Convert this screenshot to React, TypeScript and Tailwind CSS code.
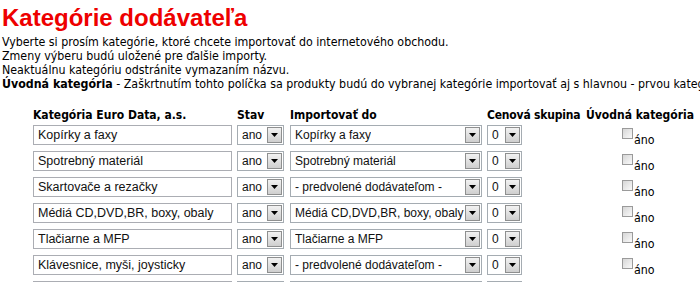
import React from "react";

type Row = {
  name: string;
  target: string;
};

const rows: Row[] = [
  { name: "Kopírky a faxy", target: "Kopírky a faxy" },
  { name: "Spotrebný materiál", target: "Spotrebný materiál" },
  { name: "Skartovače a rezačky", target: "- predvolené dodávateľom -" },
  { name: "Médiá CD,DVD,BR, boxy, obaly", target: "Médiá CD,DVD,BR, boxy, obaly" },
  { name: "Tlačiarne a MFP", target: "Tlačiarne a MFP" },
  { name: "Klávesnice, myši, joysticky", target: "- predvolené dodávateľom -" },
  // last row is only partly in view
  { name: "", target: "" },
];

function Arrow() {
  return (
    <div className="flex h-[16px] w-[15px] shrink-0 items-center justify-center border border-[#8e8f8f] bg-gradient-to-b from-[#f2f2f2] to-[#cfcfcf]">
      <svg width="7" height="4" viewBox="0 0 7 4">
        <path d="M0 0h7L3.5 4z" fill="#000" />
      </svg>
    </div>
  );
}

function Select({ value, width }: { value: string; width: string }) {
  return (
    <div
      className={`flex h-[20px] ${width} shrink-0 items-center justify-between border border-[#a5acb2] bg-white pl-[4px] pr-[1px]`}
    >
      <span className="overflow-hidden whitespace-nowrap text-[12px] leading-[18px] text-[#111]">{value}</span>
      <Arrow />
    </div>
  );
}

export default function App() {
  return (
    <div className="h-[282px] w-[700px] overflow-hidden bg-white font-['DejaVu_Sans_Condensed','DejaVu_Sans',sans-serif] text-[12.3px] text-black">
      <h1 className="pl-[2px] font-['Liberation_Sans',Arial,sans-serif] text-[24px] font-bold leading-[35px] text-[#ee0000]">
        Kategórie dodávateľa
      </h1>

      {/* Intro */}
      <div className="whitespace-nowrap pl-[2px] leading-[14px]">
        <p>Vyberte si prosím kategórie, ktoré chcete importovať do internetového obchodu.</p>
        <p>Zmeny výberu budú uložené pre ďalšie importy.</p>
        <p>Neaktuálnu kategóriu odstránite vymazaním názvu.</p>
        <p>
          <b>Úvodná kategória</b> - Zaškrtnutím tohto políčka sa produkty budú do vybranej
          kategórie importovať aj s hlavnou - prvou kategóriou.
        </p>
      </div>

      {/* Table */}
      <div className="mt-[17px] pl-[33px]">
        <div className="flex h-[17px] items-start whitespace-nowrap text-[12px] font-bold leading-[14px]">
          <div className="w-[204px]">Kategória Euro Data, a.s.</div>
          <div className="w-[53px]">Stav</div>
          <div className="w-[197px]">Importovať do</div>
          <div className="w-[99px] tracking-[-0.2px]">Cenová skupina</div>
          <div>Úvodná kategória</div>
        </div>

        <div className="flex flex-col gap-[6px] font-['Liberation_Sans',Arial,sans-serif]">
          {rows.map((row, i) => (
            <div key={i} className="flex h-[20px] items-start">
              <div className="flex h-[20px] w-[199px] shrink-0 items-center border border-[#abadb3] bg-white pl-[4px] text-[12.5px] text-[#111]">
                {row.name}
              </div>
              <div className="ml-[5px]">
                <Select value={row.name ? "ano" : ""} width="w-[47px]" />
              </div>
              <div className="ml-[6px]">
                <Select value={row.target} width="w-[192px]" />
              </div>
              <div className="ml-[5px]">
                <Select value={row.name ? "0" : ""} width="w-[35px]" />
              </div>
              {row.name && (
                <div className="ml-[100px] flex items-start pt-[3px]">
                  <div className="h-[11px] w-[11px] border border-[#9a9a9a] bg-gradient-to-br from-[#d6d6d6] to-[#fafafa]" />
                  <span className="mt-[5px] pl-[1px] font-['DejaVu_Sans_Condensed','DejaVu_Sans',sans-serif] text-[12.3px] leading-[14px]">
                    áno
                  </span>
                </div>
              )}
            </div>
          ))}
        </div>
      </div>
    </div>
  );
}
